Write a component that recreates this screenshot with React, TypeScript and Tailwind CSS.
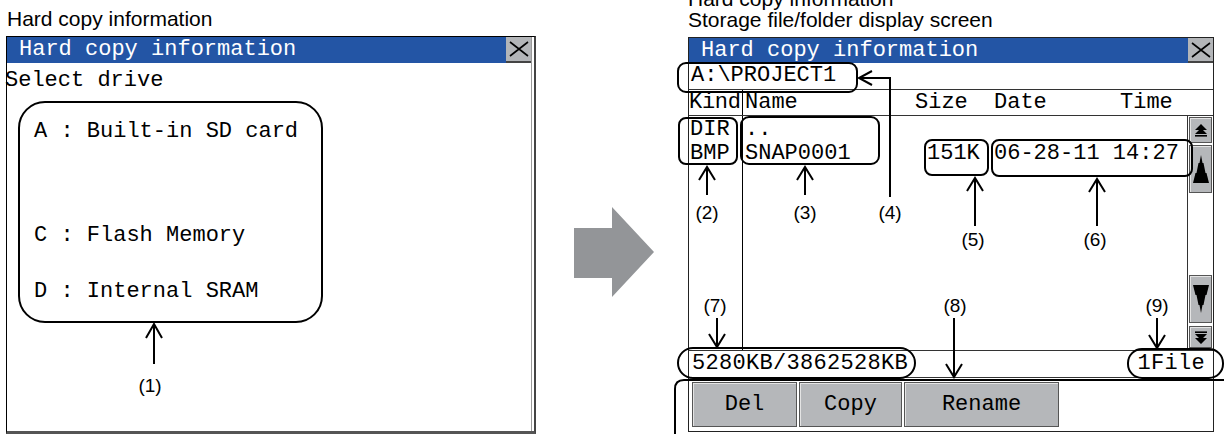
const mono = "font-['Liberation_Mono','DejaVu_Sans_Mono',monospace] text-[22px] leading-[26px] text-black"
const sans = "font-['Liberation_Sans',Arial,sans-serif] text-[21px] leading-[21px] text-black"
const lbl = "font-['Liberation_Sans',Arial,sans-serif] text-[19px] leading-[20px] text-black"
const btn = 'bg-[#b5b7ba] border border-[#555] shadow-[inset_1px_1px_0_#e4e4e4]'

const CloseX = () => (
  <svg width="20" height="16" viewBox="0 0 20 16">
    <path d="M1 1 L19 15 M19 1 L1 15" stroke="#000" strokeWidth="1.6" fill="none" />
  </svg>
)

const TitleBar = ({ h }: { h: string }) => (
  <div className={`flex ${h}`}>
    <div className={`flex-1 bg-[#2355a5] pl-[12px] flex items-center ${mono} text-white`}>
      <span className="text-white">Hard copy information</span>
    </div>
    <div className="w-[25px] bg-[#b3b5b8] border-b-2 border-[#444] flex items-center justify-center">
      <CloseX />
    </div>
  </div>
)

const DoubleArrow = ({ down }: { down?: boolean }) => (
  <svg width="14" height="13" viewBox="0 0 14 13" className={down ? 'rotate-180' : ''}>
    <path d="M7 0 L13 6 L1 6Z M7 4 L13 10 L1 10Z" fill="#000" />
    <rect x="1" y="11" width="12" height="1.6" fill="#000" />
  </svg>
)

const Spire = ({ down }: { down?: boolean }) => (
  <svg width="16" height="28" viewBox="0 0 16 28" className={down ? 'rotate-180' : ''}>
    <polygon points="8,0 9.5,8 10.5,8 12.5,18 13.5,18 16,28 0,28 2.5,18 3.5,18 5.5,8 6.5,8" fill="#000" />
  </svg>
)

const Label = ({ x, y, text }: { x: string; y: string; text: string }) => (
  <div className={`absolute w-[40px] text-center ${x} ${y} ${lbl}`}>{text}</div>
)

export default function App() {
  return (
    <div className="relative flex w-[1224px] h-[434px] overflow-hidden bg-white">
      {/* left: drive select */}
      <div className="w-[536px] pl-[6px] flex flex-col">
        <div className={`h-[36px] pt-[8px] pl-[1px] ${sans}`}>Hard copy information</div>
        <div className="w-[530px] h-[398px] border-t border-l border-black border-r-2 border-r-[#444] border-b-[3px] border-b-[#555] pr-[2px]">
          <div className="h-full border-r border-[#999] flex flex-col">
            <TitleBar h="h-[26px]" />
            <div className={`${mono} mt-[5px] ml-[-2px]`}>Select drive</div>
            <div className={`${mono} mt-[25px] pl-[27px]`}>A : Built-in SD card</div>
            <div className={`${mono} mt-[78px] pl-[27px]`}>C : Flash Memory</div>
            <div className={`${mono} mt-[30px] pl-[27px]`}>D : Internal SRAM</div>
          </div>
        </div>
      </div>

      {/* middle arrow */}
      <div className="w-[152px] pt-[207px] pl-[38px]">
        <svg width="80" height="90" viewBox="574 207 80 90">
          <polygon points="574,228 612,228 612,207 654,252 612,297 612,278 574,278" fill="#939598" />
        </svg>
      </div>

      {/* right: file list */}
      <div className="w-[536px] flex flex-col">
        <div className={`h-[37px] ${sans}`}>
          <div className="mt-[-12px] whitespace-nowrap">Hard copy information</div>
          <div className="whitespace-nowrap">Storage file/folder display screen</div>
        </div>
        <div className="w-[526px] h-[395px] border border-[#222] flex flex-col">
          <TitleBar h="h-[25px]" />
          <div className={`h-[27px] border-b border-[#333] pl-[2px] ${mono}`}>A:\PROJECT1</div>
          <div className={`h-[26px] border-b border-[#333] flex ${mono} whitespace-nowrap`}>
            <div className="w-[54px] border-r border-black tracking-[-0.3px]">Kind</div>
            <div className="w-[170px] pl-[2px]">Name</div>
            <div className="w-[80px] pl-[2px]">Size</div>
            <div className="w-[124px] pl-[1px]">Date</div>
            <div className="pl-[3px]">Time</div>
          </div>
          <div className="h-[235px] border-b border-[#333] flex">
            <div className={`w-[54px] border-r border-black ${mono} pl-[1px]`}>
              <div className="h-[25px] pt-px">DIR</div>
              <div className="h-[25px]">BMP</div>
            </div>
            <div className={`flex-1 ${mono} whitespace-nowrap`}>
              <div className="h-[25px] pt-px pl-[2px]">..</div>
              <div className="h-[25px] flex">
                <div className="w-[184px] pl-[2px]">SNAP0001</div>
                <div className="w-[67px]">151K</div>
                <div>06-28-11 14:27</div>
              </div>
            </div>
            <div className="w-[26px] border-l border-[#333] flex flex-col px-px pt-px pb-[2px]">
              <div className={`h-[26px] flex items-center justify-center ${btn}`}>
                <DoubleArrow />
              </div>
              <div className={`h-[48px] mt-[2px] flex items-center justify-center ${btn}`}>
                <Spire />
              </div>
              <div className="flex-1" />
              <div className={`h-[48px] flex items-center justify-center ${btn}`}>
                <Spire down />
              </div>
              <div className={`h-[22px] mt-[3px] flex items-center justify-center ${btn}`}>
                <DoubleArrow down />
              </div>
            </div>
          </div>
          <div className={`h-[27px] border-b border-[#333] flex justify-between pl-[3px] pr-[8px] ${mono} tracking-[0.3px]`}>
            <span>5280KB/3862528KB</span>
            <span>1File</span>
          </div>
          <div className={`flex-1 flex gap-[2px] pl-[3px] pt-[4px] pb-[4px] ${mono}`}>
            <div className={`w-[105px] flex items-center justify-center ${btn}`}>Del</div>
            <div className={`w-[103px] flex items-center justify-center ${btn}`}>Copy</div>
            <div className={`w-[155px] flex items-center justify-center ${btn}`}>Rename</div>
          </div>
        </div>
      </div>

      {/* annotations */}
      <svg className="absolute inset-0 pointer-events-none" width="1224" height="434" viewBox="0 0 1224 434">
        <g fill="none" stroke="#000" strokeWidth="2">
          <rect x="19" y="102" width="303" height="220" rx="26" />
          <path d="M154 324 V364 M146 338 L154 324 L162 338" />

          <rect x="678" y="63" width="179" height="29" rx="8" />
          <path d="M890 197 V78 H859 M872 71 L859 78 L872 85" />

          <rect x="679" y="118" width="58" height="46" rx="7" />
          <path d="M707 167 V195 M699 180 L707 167 L715 180" />
          <rect x="741" y="117" width="138" height="47" rx="8" />
          <path d="M805 167 V195 M797 180 L805 167 L813 180" />

          <rect x="925" y="140" width="63" height="35" rx="7" />
          <path d="M975 178 V226 M967 191 L975 178 L983 191" />
          <rect x="992" y="140" width="200" height="36" rx="7" />
          <path d="M1097 179 V226 M1089 192 L1097 179 L1105 192" />

          <rect x="678" y="348" width="237" height="30" rx="15" />
          <path d="M717 318 V347 M709 334 L717 347 L725 334" />
          <path d="M954 318 V377 M946 364 L954 377 L962 364" />
          <rect x="1128" y="349" width="95" height="29" rx="14" />
          <path d="M1157 318 V348 M1149 335 L1157 348 L1165 335" />

          <path d="M675 440 V389 Q675 380 684 380 H1230" />
        </g>
      </svg>
      <Label x="left-[130px]" y="top-[376px]" text="(1)" />
      <Label x="left-[687px]" y="top-[203px]" text="(2)" />
      <Label x="left-[785px]" y="top-[203px]" text="(3)" />
      <Label x="left-[870px]" y="top-[203px]" text="(4)" />
      <Label x="left-[953px]" y="top-[230px]" text="(5)" />
      <Label x="left-[1075px]" y="top-[230px]" text="(6)" />
      <Label x="left-[695px]" y="top-[296px]" text="(7)" />
      <Label x="left-[935px]" y="top-[296px]" text="(8)" />
      <Label x="left-[1137px]" y="top-[296px]" text="(9)" />
    </div>
  )
}
